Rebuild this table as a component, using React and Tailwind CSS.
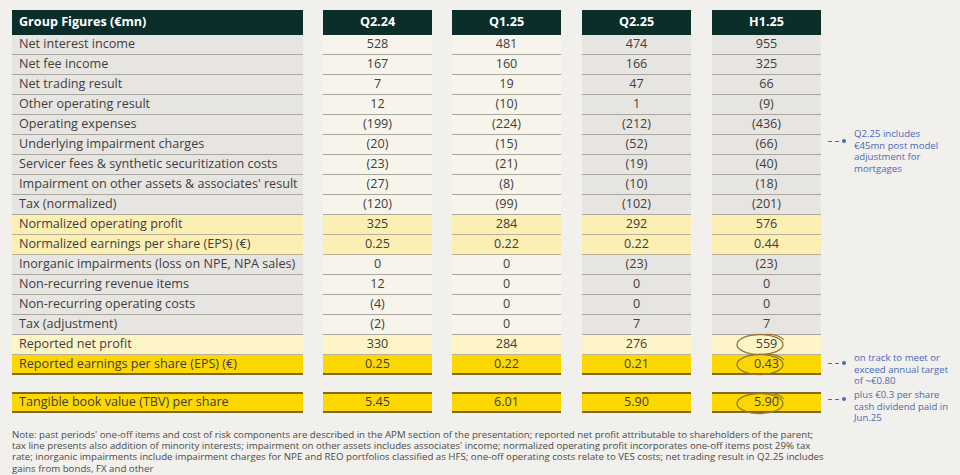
import { Fragment } from "react";

const rows = [
    { label: "Net interest income", v: ["528", "481", "474", "955"] },
    { label: "Net fee income", v: ["167", "160", "166", "325"] },
    { label: "Net trading result", v: ["7", "19", "47", "66"] },
    { label: "Other operating result", v: ["12", "(10)", "1", "(9)"] },
    { label: "Operating expenses", v: ["(199)", "(224)", "(212)", "(436)"] },
    { label: "Underlying impairment charges", v: ["(20)", "(15)", "(52)", "(66)"] },
    { label: "Servicer fees & synthetic securitization costs", v: ["(23)", "(21)", "(19)", "(40)"] },
    { label: "Impairment on other assets & associates' result", v: ["(27)", "(8)", "(10)", "(18)"] },
    { label: "Tax (normalized)", v: ["(120)", "(99)", "(102)", "(201)"] },
    { label: "Normalized operating profit", v: ["325", "284", "292", "576"], kind: "norm" },
    { label: "Normalized earnings per share (EPS) (€)", v: ["0.25", "0.22", "0.22", "0.44"], kind: "norm" },
    { label: "Inorganic impairments (loss on NPE, NPA sales)", v: ["0", "0", "(23)", "(23)"] },
    { label: "Non-recurring revenue items", v: ["12", "0", "0", "0"] },
    { label: "Non-recurring operating costs", v: ["(4)", "0", "0", "0"] },
    { label: "Tax (adjustment)", v: ["(2)", "0", "7", "7"] },
    { label: "Reported net profit", v: ["330", "284", "276", "559"], kind: "rep", circle: true },
    { label: "Reported earnings per share (EPS) (€)", v: ["0.25", "0.22", "0.21", "0.43"], kind: "eps", circle: true },
];

const tbv = { label: "Tangible book value (TBV) per share", v: ["5.45", "6.01", "5.90", "5.90"] };

const headers = ["Q2.24", "Q1.25", "Q2.25", "H1.25"];

const rowClass = (kind, cream) => {
    if (kind === "norm") return "bg-[#fcefb3] border-b border-[#b9b29a]";
    if (kind === "rep") return "bg-[#fdf4c8] border-b border-[#b9b29a]";
    if (kind === "eps") return "bg-[#fdd700] border-b-2 border-[#7d6a2c]";
    return (cream ? "bg-[#f7f4ec]" : "bg-[#e7e5e1]") + " border-b border-[#aaa79f]";
};

// hand drawn ring around the H1.25 figures
const Circle = () => (
    <svg className="absolute left-[23px] top-[-3px] pointer-events-none" width="54" height="25" viewBox="0 0 54 25">
        <ellipse cx="25" cy="12.5" rx="23" ry="10" fill="none" stroke="#94783a" strokeWidth="1.3" />
        <path d="M29 2.5 C37 2 45 3.5 49 8" fill="none" stroke="#94783a" strokeWidth="1.1" />
    </svg>
);

const Callout = ({ lines, top }) => (
    <div className="flex items-start">
        <div className="flex items-center h-[12px] shrink-0" style={{ marginTop: top }}>
            <span className="block w-[4px] h-[1px] bg-[#4a6bb7]"></span>
            <span className="block w-[3px]"></span>
            <span className="block w-[4px] h-[1px] bg-[#4a6bb7]"></span>
            <span className="block w-[3px]"></span>
            <span className="block w-[4px] h-[4px] rounded-full bg-[#4a6bb7]"></span>
        </div>
        <div className="ml-[8px] text-[9.6px] leading-[11.5px] text-[#4a6bb7] whitespace-nowrap">
            {lines.map((l, i) => (
                <div key={i}>{l}</div>
            ))}
        </div>
    </div>
);

const App = () => {
    return (
        <div className="w-[960px] h-[475px] overflow-hidden bg-[#f1f0ec] text-[#3e3e3e]" style={{ fontFamily: '"Open Sans", "Noto Sans", sans-serif' }}>
            <div className="flex pt-[10px] pl-[12px]">
                {/* label column */}
                <div className="w-[291px] flex flex-col">
                    <div className="h-[25px] bg-[#0b2e2b] text-white font-bold text-[12.6px] flex items-center pl-[7px]">Group Figures (€mn)</div>
                    {rows.map((r, i) => (
                        <div key={i} className={`h-[20px] text-[12.6px] flex items-center pl-[7px] whitespace-nowrap ${rowClass(r.kind, false)}`}>{r.label}</div>
                    ))}
                    <div className="h-[17px]"></div>
                    <div className="h-[21px] text-[12.6px] flex items-center pl-[7px] bg-[#fdd700] border-y-2 border-[#7d6a2c]">{tbv.label}</div>
                </div>

                {headers.map((h, c) => (
                    <div key={h} className={`w-[109px] flex flex-col ${c < 2 ? "ml-[20px]" : "ml-[21px]"}`}>
                        <div className="h-[25px] bg-[#0b2e2b] text-white font-bold text-[12.6px] flex items-center justify-center">{h}</div>
                        {rows.map((r, i) => (
                            <div key={i} className={`relative h-[20px] text-[12.6px] flex items-center justify-center ${rowClass(r.kind, c < 2)}`}>
                                {r.v[c]}
                                {c === 3 && r.circle && <Circle />}
                            </div>
                        ))}
                        <div className="h-[17px]"></div>
                        <div className="relative h-[21px] text-[12.6px] flex items-center justify-center bg-[#fdd700] border-y-2 border-[#7d6a2c]">
                            {tbv.v[c]}
                            {c === 3 && <Circle />}
                        </div>
                    </div>
                ))}

                {/* callouts */}
                <div className="ml-[7px] flex flex-col">
                    <div className="h-[25px]"></div>
                    {rows.map((r, i) => (
                        <div key={i} className="h-[20px] overflow-visible">
                            {i === 5 && <div className="-mt-[7px]"><Callout top="7px" lines={["Q2.25 includes", "€45mn post model", "adjustment for", "mortgages"]} /></div>}
                            {i === 16 && <div className="-mt-[3px]"><Callout top="5px" lines={["on track to meet or", "exceed annual target", "of ~€0.80"]} /></div>}
                        </div>
                    ))}
                    <div className="h-[17px]"></div>
                    <div className="h-[21px]">
                        <div className="-mt-[3px]"><Callout top="4px" lines={["plus €0.3 per share", "cash dividend paid in", "Jun.25"]} /></div>
                    </div>
                </div>
            </div>

            <p className="mt-[16px] ml-[12px] text-[9.7px] leading-[11.2px] text-[#4b4b4b] whitespace-nowrap">
                Note: past periods' one-off items and cost of risk components are described in the APM section of the presentation; reported net profit attributable to shareholders of the parent;<br />
                tax line presents also addition of minority interests; impairment on other assets includes associates' income; normalized operating profit incorporates one-off items post 29% tax<br />
                rate; inorganic impairments include impairment charges for NPE and REO portfolios classified as HFS; one-off operating costs relate to VES costs; net trading result in Q2.25 includes<br />
                gains from bonds, FX and other
            </p>
        </div>
    );
};

export default App;
